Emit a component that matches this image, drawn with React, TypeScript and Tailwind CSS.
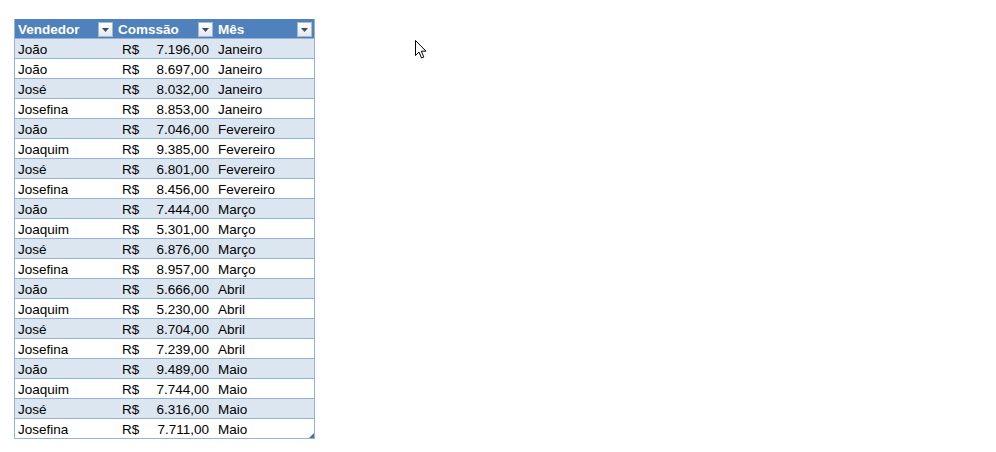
import React from "react";

const rows: [string, string, string][] = [
  ["João", "7.196,00", "Janeiro"],
  ["João", "8.697,00", "Janeiro"],
  ["José", "8.032,00", "Janeiro"],
  ["Josefina", "8.853,00", "Janeiro"],
  ["João", "7.046,00", "Fevereiro"],
  ["Joaquim", "9.385,00", "Fevereiro"],
  ["José", "6.801,00", "Fevereiro"],
  ["Josefina", "8.456,00", "Fevereiro"],
  ["João", "7.444,00", "Março"],
  ["Joaquim", "5.301,00", "Março"],
  ["José", "6.876,00", "Março"],
  ["Josefina", "8.957,00", "Março"],
  ["João", "5.666,00", "Abril"],
  ["Joaquim", "5.230,00", "Abril"],
  ["José", "8.704,00", "Abril"],
  ["Josefina", "7.239,00", "Abril"],
  ["João", "9.489,00", "Maio"],
  ["Joaquim", "7.744,00", "Maio"],
  ["José", "6.316,00", "Maio"],
  ["Josefina", "7.711,00", "Maio"],
];

function Drop() {
  return (
    <div className="w-[15px] h-[15px] bg-gradient-to-b from-white to-[#e4e9f0] border border-[#a9b8cc] flex items-center justify-center mr-[2px]">
      <svg width="7" height="4" viewBox="0 0 7 4">
        <path d="M0 0 H7 L3.5 4 Z" fill="#404a58" />
      </svg>
    </div>
  );
}

export default function App() {
  return (
    <div
      className="w-[996px] h-[452px] bg-white relative"
      style={{ fontFamily: '"Liberation Sans", Arial, sans-serif' }}
    >
      <div className="pt-[19px] pl-[14px]">
        <div className="w-[301px] border-l border-r border-b border-[#95b3d7] relative text-[13.5px] text-black">
          <div className="grid grid-cols-[100px_100px_99px] h-[19px] bg-[#4f81bd] text-white font-bold">
            <div className="flex items-center justify-between pl-[3px]">
              <span className="pt-[1px]">Vendedor</span>
              <Drop />
            </div>
            <div className="flex items-center justify-between pl-[3px]">
              <span className="pt-[1px]">Comssão</span>
              <Drop />
            </div>
            <div className="flex items-center justify-between pl-[3px]">
              <span className="pt-[1px]">Mês</span>
              <Drop />
            </div>
          </div>
          {rows.map((r, i) => (
            <div
              key={i}
              className={
                "grid grid-cols-[100px_100px_99px] h-[20px] items-center border-t border-[#95b3d7] " +
                (i % 2 === 0 ? "bg-[#dce6f1]" : "bg-white")
              }
            >
              <div className="pl-[3px] leading-none pt-[3px]">{r[0]}</div>
              <div className="flex justify-between pl-[7px] pr-[6px] leading-none pt-[3px]">
                <span>R$</span>
                <span>{r[1]}</span>
              </div>
              <div className="pl-[3px] leading-none pt-[3px]">{r[2]}</div>
            </div>
          ))}
          <div className="absolute right-[0px] bottom-[0px]">
            <svg width="5" height="5" viewBox="0 0 5 5">
              <path d="M5 0 V5 H0 Z" fill="#4f6fa8" />
            </svg>
          </div>
        </div>
      </div>
      <div className="absolute left-[415px] top-[40px]">
        <svg width="13" height="20" viewBox="0 0 13 20">
          <path
            d="M0.5 0.5 L0.5 15.5 L4 12 L6.5 18 L8.8 17 L6.3 11.2 L11 11.2 Z"
            fill="white"
            stroke="black"
            strokeWidth="1"
            strokeLinejoin="miter"
          />
        </svg>
      </div>
    </div>
  );
}
